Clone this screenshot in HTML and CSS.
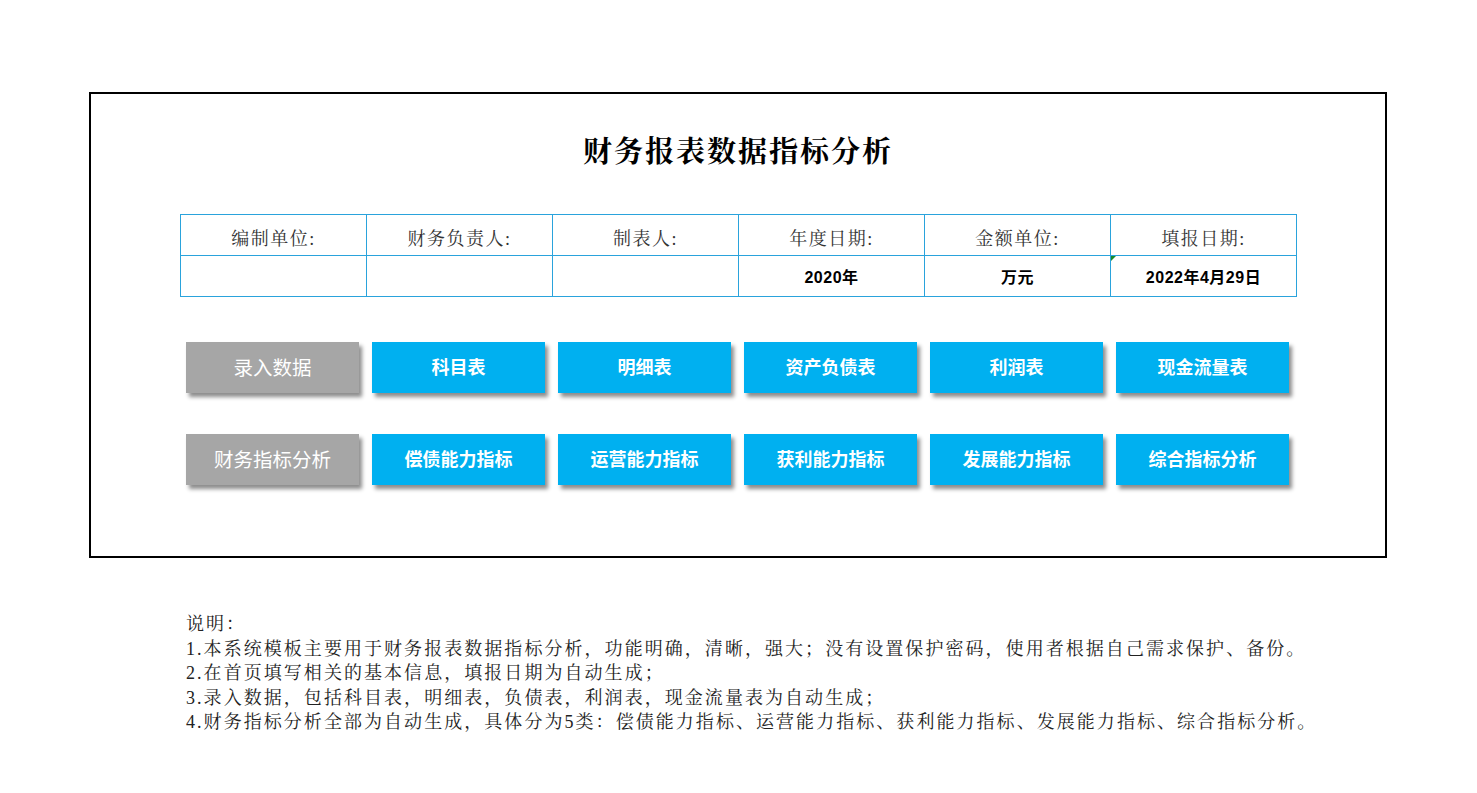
FILE: index.html
```html
<!DOCTYPE html>
<html lang="zh-CN">
<head>
<meta charset="utf-8">
<title>财务报表数据指标分析</title>
<link rel="stylesheet" href="styles.css">
</head>
<body>
<div class="sheet">
  <h1 class="title">财务报表数据指标分析</h1>
  <table class="info">
    <tr class="head">
      <td>编制单位:</td>
      <td>财务负责人:</td>
      <td>制表人:</td>
      <td>年度日期:</td>
      <td>金额单位:</td>
      <td>填报日期:</td>
    </tr>
    <tr class="vals">
      <td></td>
      <td></td>
      <td></td>
      <td>2020年</td>
      <td>万元</td>
      <td class="flag">2022年4月29日</td>
    </tr>
  </table>
  <div class="buttons">
    <div class="btn gray">录入数据</div>
    <div class="btn blue">科目表</div>
    <div class="btn blue">明细表</div>
    <div class="btn blue">资产负债表</div>
    <div class="btn blue">利润表</div>
    <div class="btn blue">现金流量表</div>
    <div class="btn gray">财务指标分析</div>
    <div class="btn blue">偿债能力指标</div>
    <div class="btn blue">运营能力指标</div>
    <div class="btn blue">获利能力指标</div>
    <div class="btn blue">发展能力指标</div>
    <div class="btn blue">综合指标分析</div>
  </div>
</div>
<div class="notes">
  <p>说明：</p>
  <p>1.本系统模板主要用于财务报表数据指标分析，功能明确，清晰，强大；没有设置保护密码，使用者根据自己需求保护、备份。</p>
  <p>2.在首页填写相关的基本信息，填报日期为自动生成；</p>
  <p>3.录入数据，包括科目表，明细表，负债表，利润表，现金流量表为自动生成；</p>
  <p>4.财务指标分析全部为自动生成，具体分为5类：偿债能力指标、运营能力指标、获利能力指标、发展能力指标、综合指标分析。</p>
</div>
</body>
</html>
```
FILE: styles.css
```css
html, body {
  margin: 0;
  padding: 0;
  background: #ffffff;
}
body {
  font-family: "Liberation Serif", "Noto Serif CJK SC", "Noto Sans CJK SC", serif;
  color: #222;
}
.sheet {
  box-sizing: border-box;
  width: 1298px;
  height: 466px;
  margin: 92px 0 0 89px;
  border: 2px solid #000;
  padding: 36px 0 0 89px;
}
.title {
  margin: 0 0 0 -89px;
  text-align: center;
  font-family: "Noto Serif CJK SC", "Noto Sans CJK SC", serif;
  font-size: 29px;
  font-weight: 700;
  letter-spacing: 2px;
  line-height: 40px;
  height: 40px;
  color: #000;
}
.info {
  margin-top: 44px;
  border-collapse: collapse;
  table-layout: fixed;
  width: 1117px;
}
.info td {
  height: 40px;
  padding: 0;
  border: 1px solid #2aa3dc;
  text-align: center;
  vertical-align: middle;
}
.head td {
  font-family: "Liberation Serif", "Noto Serif CJK SC", "Noto Sans CJK SC", serif;
  font-size: 18px;
  letter-spacing: 1.5px;
  color: #333;
  height: 37px;
  padding-top: 3px;
}
.vals td {
  font-family: "Liberation Sans", "Noto Sans CJK SC", sans-serif;
  font-size: 16px;
  font-weight: 700;
  letter-spacing: 0.5px;
  color: #000;
}
.flag {
  position: relative;
}
.flag::before {
  content: "";
  position: absolute;
  left: 0;
  top: 0;
  width: 0;
  height: 0;
  border-top: 5px solid #1a8a2a;
  border-right: 5px solid transparent;
}
.buttons {
  margin: 45px 0 0 6px;
  display: grid;
  grid-template-columns: repeat(6, 173px);
  grid-auto-rows: 51px;
  column-gap: 13px;
  row-gap: 41px;
}
.btn {
  box-sizing: border-box;
  display: flex;
  align-items: center;
  justify-content: center;
  padding-bottom: 3px;
  color: #fff;
  box-shadow: 3px 4px 4px rgba(0, 0, 0, 0.45);
  font-family: "Noto Sans CJK SC", sans-serif;
}
.blue {
  background: #00b0f0;
  font-size: 18px;
  font-weight: 700;
}
.gray {
  background: #a6a6a6;
  font-size: 19.5px;
  font-weight: 400;
}
.notes {
  margin: 54px 0 0 186px;
  font-size: 18px;
  letter-spacing: 2.05px;
  color: #222;
}
.notes p {
  margin: 0;
  line-height: 24.5px;
  white-space: nowrap;
}
```
